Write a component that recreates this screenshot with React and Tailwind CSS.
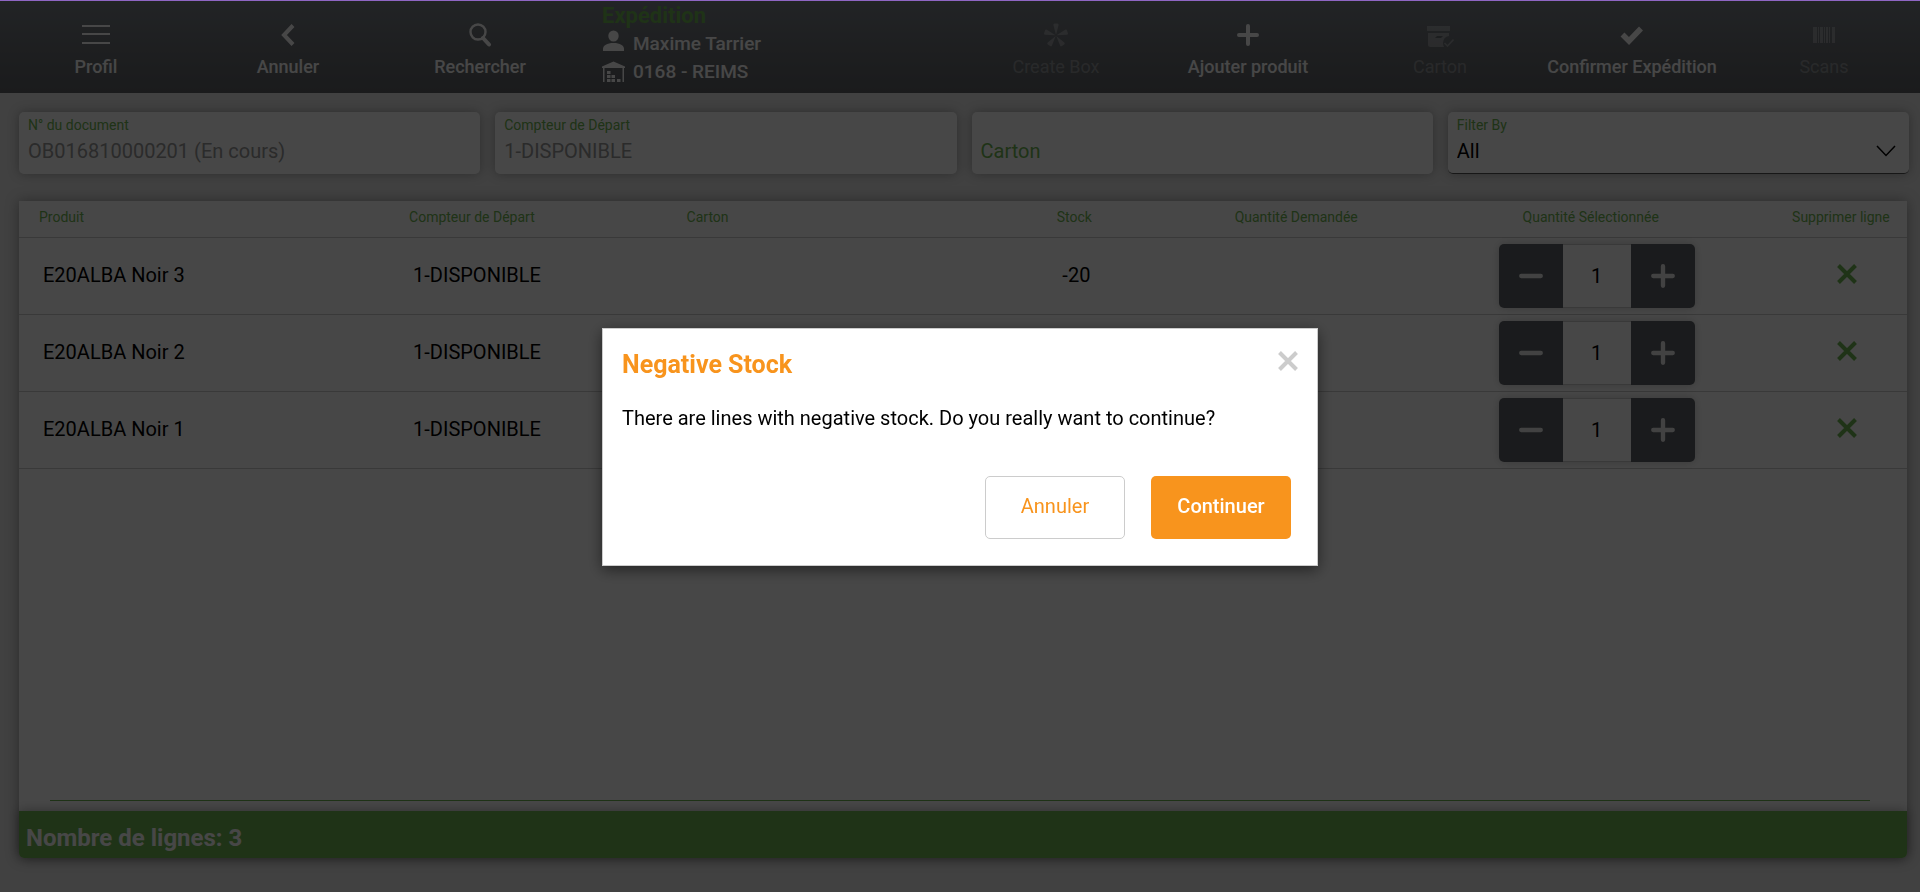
import React from "react";

const MenuIcon = () => (
  <svg width="28" height="24" viewBox="0 0 28 24" stroke="currentColor" strokeWidth="2" aria-hidden="true">
    <path d="M0 3h28M0 11h28M0 20h28" />
  </svg>
);

const BackIcon = () => (
  <svg width="24" height="24" viewBox="0 0 24 24" fill="none" stroke="currentColor" strokeWidth="4" aria-hidden="true">
    <path d="M17 2.5 8 12l9 9.5" strokeLinejoin="miter" />
  </svg>
);

const SearchIcon = () => (
  <svg width="24" height="24" viewBox="0 0 24 24" fill="none" stroke="currentColor" aria-hidden="true">
    <circle cx="10" cy="9" r="7.5" strokeWidth="2.4" />
    <path d="M15 15l6 6.5" strokeWidth="4" strokeLinecap="round" />
  </svg>
);

const AsteriskIcon = () => (
  <svg width="24" height="24" viewBox="0 0 24 24" fill="currentColor" aria-hidden="true">
    {[0, 72, 144, 216, 288].map((angle) => (
      <path key={angle} d="M12 12 9.400 2q-.3-1.500 1.200-1.500h2.800q1.500 0 1.200 1.500z" transform={`rotate(${angle} 12 12.5)`} />
    ))}
  </svg>
);

const PlusIcon = ({ size = 24 }) => (
  <svg width={size} height={size} viewBox="0 0 24 24" stroke="currentColor" strokeWidth="4" strokeLinecap="round" aria-hidden="true">
    <path d="M12 3v18M3 12h18" />
  </svg>
);

const MinusIcon = () => (
  <svg width="26" height="26" viewBox="0 0 24 24" stroke="currentColor" strokeWidth="4" strokeLinecap="round" aria-hidden="true">
    <path d="M3 12h18" />
  </svg>
);

const CartonIcon = () => (
  <svg width="28" height="24" viewBox="0 0 28 24" aria-hidden="true">
    <path fill="currentColor" d="M1 3h23v5H1zM2 10h21v3a7.500 7.500 0 0 0-6 7c0 1.500.4 2.800 1 4H4.500A2.500 2.500 0 0 1 2 21.500z" />
    <path d="M9 15l2-2h6l-2 2z" fill="#676b71" />
    <path d="M18.500 20l3 3 6-6.500" fill="none" stroke="currentColor" strokeWidth="1.600" />
  </svg>
);

const CheckIcon = () => (
  <svg width="24" height="24" viewBox="0 0 24 24" fill="none" stroke="currentColor" strokeWidth="5.500" aria-hidden="true">
    <path d="M2.500 11.500l6.500 6.500L21 5.500" />
  </svg>
);

const BarcodeIcon = () => (
  <svg width="24" height="24" viewBox="0 0 24 24" fill="currentColor" aria-hidden="true">
    <path d="M1 4h4v16H1zM6 4h1v16H6zM8 4h3v16H8zM12 4h1v16h-1zM14 4h2v16h-2zM17 4h1v16h-1zM20 4h3v16h-3z" />
  </svg>
);

const UserIcon = () => (
  <svg width="24" height="22" viewBox="0 0 24 22" fill="currentColor" aria-hidden="true">
    <ellipse cx="11.500" cy="6" rx="5.200" ry="5.500" />
    <path d="M1 21v-2c0-3.500 4-6 10.500-6S22 15.500 22 19v2z" />
  </svg>
);

const StoreIcon = () => (
  <svg width="24" height="22" viewBox="0 0 24 22" fill="currentColor" aria-hidden="true">
    <path d="M0 5.500 11.500.500 23 5.500V7H22v14h-1.500V7H2.500v14H1V7H0z" />
    <path d="M5 10h3.500v3H5zM5 14h3.500v3H5zM9.500 14H13v3H9.500zM5 18h3.500v3H5zM9.500 18H13v3H9.500zM15 18h3.500v3H15z" />
  </svg>
);

const CrossIcon = () => (
  <svg width="24" height="24" viewBox="0 0 24 24" stroke="currentColor" strokeWidth="4" aria-hidden="true">
    <path d="M3.500 3.500l17 17M20.500 3.500l-17 17" />
  </svg>
);

function ToolbarButton({ icon, label, disabled }) {
  return (
    <button
      type="button"
      disabled={disabled}
      className="flex flex-col items-center gap-2 pt-[22px] text-lg/6 font-medium text-white disabled:font-normal disabled:text-white/30"
    >
      {icon}
      <span className="whitespace-nowrap">{label}</span>
    </button>
  );
}

function Field({ id, label, value }) {
  return (
    <div className="flex h-[62px] flex-col rounded-[5px] bg-white px-[9px] pt-[3px] shadow-[0_0_12px_rgba(0,0,0,0.3)]">
      <label htmlFor={id} className="text-sm/5 text-[#6fb652]">
        {label}
      </label>
      <input id={id} defaultValue={value} readOnly className="w-full bg-transparent text-xl/8 text-[#999] outline-none" />
    </div>
  );
}

const rows = [
  { product: "E20ALBA Noir 3", bin: "1-DISPONIBLE", stock: "-20", qty: "1" },
  { product: "E20ALBA Noir 2", bin: "1-DISPONIBLE", stock: "", qty: "1" },
  { product: "E20ALBA Noir 1", bin: "1-DISPONIBLE", stock: "", qty: "1" },
];

function Stepper({ label, value }) {
  return (
    <div className="mx-auto flex h-16 w-[196px] overflow-hidden rounded-[5px] shadow-[0_0_8px_rgba(0,0,0,0.2)]">
      <button type="button" aria-label="Diminuer" className="flex w-16 items-center justify-center bg-[#5f6368] text-[#eee]">
        <MinusIcon />
      </button>
      <input aria-label={label} defaultValue={value} className="min-w-0 flex-1 border-y border-[#ccc] bg-white text-center text-xl text-black outline-none" />
      <button type="button" aria-label="Augmenter" className="flex w-16 items-center justify-center bg-[#5f6368] text-[#eee]">
        <PlusIcon size={26} />
      </button>
    </div>
  );
}

function Header() {
  return (
    <header className="grid h-[93px] shrink-0 grid-cols-10 border-t border-[#8f66c4] bg-linear-to-b from-[#7b8187] via-[#6c7075] to-[#5f6266]">
      <ToolbarButton icon={<MenuIcon />} label="Profil" />
      <ToolbarButton icon={<BackIcon />} label="Annuler" />
      <ToolbarButton icon={<SearchIcon />} label="Rechercher" />
      <div className="col-span-2 pt-px pl-[26px] text-white">
        <h1 className="text-[22px]/7 font-bold text-[#6fb652]">Expédition</h1>
        <p className="flex items-start gap-[7px] text-[19px]/7 font-medium">
          <UserIcon />
          Maxime Tarrier
        </p>
        <p className="flex items-center gap-[7px] text-[19px]/7 font-medium">
          <StoreIcon />
          0168 - REIMS
        </p>
      </div>
      <ToolbarButton icon={<AsteriskIcon />} label="Create Box" disabled />
      <ToolbarButton icon={<PlusIcon />} label="Ajouter produit" />
      <ToolbarButton icon={<CartonIcon />} label="Carton" disabled />
      <ToolbarButton icon={<CheckIcon />} label="Confirmer Expédition" />
      <ToolbarButton icon={<BarcodeIcon />} label="Scans" disabled />
    </header>
  );
}

function Filters() {
  return (
    <section className="grid grid-cols-4 gap-[15px] pt-[19px] pr-[11px] pl-[19px]">
      <Field id="doc" label="N° du document" value="OB016810000201 (En cours)" />
      <Field id="bin" label="Compteur de Départ" value="1-DISPONIBLE" />
      <div className="flex h-[62px] flex-col rounded-[5px] bg-white px-[9px] pt-[23px] shadow-[0_0_12px_rgba(0,0,0,0.3)]">
        <input aria-label="Carton" placeholder="Carton" className="w-full bg-transparent text-xl/8 outline-none placeholder:text-[#6fb652]" />
      </div>
      <div className="flex h-[62px] flex-col rounded-[5px] border-b border-[#555] bg-white px-[9px] pt-[3px] shadow-[0_0_12px_rgba(0,0,0,0.3)]">
        <label htmlFor="filter" className="text-sm/5 text-[#6fb652]">
          Filter By
        </label>
        <div className="grid items-center">
          <select id="filter" className="col-start-1 row-start-1 w-full appearance-none bg-transparent text-xl/8 text-black outline-none">
            <option>All</option>
          </select>
          <svg className="pointer-events-none col-start-1 row-start-1 mr-1 justify-self-end" width="20" height="12" viewBox="0 0 20 12" fill="none" stroke="#000" strokeWidth="1.500" aria-hidden="true">
            <path d="M1 1l9 9.500L19 1" />
          </svg>
        </div>
      </div>
    </section>
  );
}

function Lines() {
  return (
    <main className="mt-[27px] mr-[13px] mb-[34px] ml-[19px] flex flex-1 flex-col rounded-b-[5px] bg-white shadow-[0_0_14px_rgba(0,0,0,0.35)]">
      <table className="w-full table-fixed border-separate border-spacing-0">
        <colgroup>
          <col className="w-[19.6%]" />
          <col className="w-[14.7%]" />
          <col className="w-[15.7%]" />
          <col className="w-[11.8%]" />
          <col className="w-[11.7%]" />
          <col className="w-[19.5%]" />
          <col className="w-[7%]" />
        </colgroup>
        <thead className="text-sm/5 text-[#6fb652] [&_th]:h-[37px] [&_th]:border-b [&_th]:border-[#ccc] [&_th]:pb-1 [&_th]:font-normal [&_th]:whitespace-nowrap">
          <tr>
            <th className="pl-5 text-left">Produit</th>
            <th className="pl-5 text-left">Compteur de Départ</th>
            <th className="pl-5 text-left">Carton</th>
            <th>Stock</th>
            <th>Quantité Demandée</th>
            <th>Quantité Sélectionnée</th>
            <th>Supprimer ligne</th>
          </tr>
        </thead>
        <tbody className="text-xl text-black [&_td]:h-[77px] [&_td]:border-b [&_td]:border-[#ccc]">
          {rows.map((r) => (
            <tr key={r.product}>
              <td className="pb-0.5 pl-6">{r.product}</td>
              <td className="pb-0.5 pl-6">{r.bin}</td>
              <td />
              <td className="pb-0.5 pl-1 text-center">{r.stock}</td>
              <td />
              <td className="pl-3">
                <Stepper label={"Quantité " + r.product} value={r.qty} />
              </td>
              <td className="pb-2 pl-3 text-center">
                <button type="button" aria-label="Supprimer ligne" className="align-middle text-[#6fb652]">
                  <CrossIcon />
                </button>
              </td>
            </tr>
          ))}
        </tbody>
      </table>
      <div className="mt-auto mr-[37px] mb-2.5 ml-[31px] border-b border-[#6fb652]" />
      <footer className="h-[47px] rounded-b-[5px] bg-[#6fb652] px-[7px] pt-1 text-2xl/[46px] font-bold text-white shadow-[0_0_12px_rgba(0,0,0,0.35)]">
        Nombre de lignes: 3
      </footer>
    </main>
  );
}

function Dialog() {
  return (
    <div className="fixed inset-x-0 top-px bottom-0 flex items-center justify-center bg-black/72">
      <div
        role="dialog"
        aria-modal="true"
        aria-labelledby="dialog-title"
        className="w-[716px] border border-[#ccc] bg-white shadow-[0_4px_14px_rgba(0,0,0,0.5)]"
      >
        <div className="flex items-start justify-between pt-5 pr-[17px] pl-[19px]">
          <h2 id="dialog-title" className="text-[25px]/8 font-bold text-[#f8941d]">
            Negative Stock
          </h2>
          <button type="button" aria-label="Fermer" className="text-[#ccc]">
            <CrossIcon />
          </button>
        </div>
        <p className="px-[19px] pt-[21px] pb-[42px] text-xl/8 text-black">There are lines with negative stock. Do you really want to continue?</p>
        <div className="flex justify-end gap-[26px] px-[26px] pb-[26px] text-xl">
          <button type="button" className="h-[63px] w-[140px] rounded-[5px] border border-[#ccc] bg-white pb-0.5 text-[#f8941d]">
            Annuler
          </button>
          <button type="button" className="h-[63px] w-[140px] rounded-[5px] bg-[#f8941d] pb-0.5 font-medium text-white">
            Continuer
          </button>
        </div>
      </div>
    </div>
  );
}

export default function App() {
  return (
    <div className="flex min-h-screen flex-col bg-[#e8e8e8] font-['Roboto',sans-serif]">
      <Header />
      <Filters />
      <Lines />
      <Dialog />
    </div>
  );
}
